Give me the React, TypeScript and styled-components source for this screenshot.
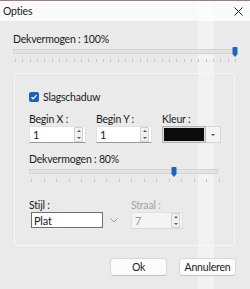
import styled, { createGlobalStyle } from 'styled-components'

const GlobalStyle = createGlobalStyle`
  html, body {
    margin: 0;
    padding: 0;
  }
  body {
    font-family: Lato, 'Noto Sans', sans-serif;
    font-size: 10.5px;
    letter-spacing: -0.2px;
    color: #1b1b1b;
  }
`

const Window = styled.div`
  width: 250px;
  height: 289px;
  box-sizing: border-box;
  display: flex;
  flex-direction: column;
  border-top: 1px solid #9a7f84;
  background:
    linear-gradient(90deg, transparent 0 198px, rgba(255, 255, 255, 0.4) 198px 214px, transparent 214px),
    #eaeaea;
  overflow: hidden;
`

const TitleBar = styled.div`
  height: 20px;
  display: flex;
  align-items: center;
  justify-content: space-between;
  padding: 0 7px 0 3px;
  background: rgba(255, 255, 255, 0.75);
  font-size: 10.5px;
`

const Body = styled.div`
  flex: 1;
  display: flex;
  flex-direction: column;
  padding: 12px 14px 0 13px;
`

const Label = styled.div<{ $disabled?: boolean }>`
  line-height: 13px;
  height: 13px;
  white-space: nowrap;
  color: ${(p) => (p.$disabled ? '#a3a3a3' : '#1b1b1b')};
`

const SliderBox = styled.div<{ $width: number }>`
  width: ${(p) => p.$width}px;
  display: flex;
  flex-direction: column;
  gap: 2px;
  margin-top: 1px;
`

const Rail = styled.div`
  position: relative;
  height: 10px;
  padding: 2px 0;
  box-sizing: border-box;
`

const Track = styled.div`
  height: 5px;
  margin-right: 4px;
  box-sizing: border-box;
  background: #e3e3e3;
  border: 1px solid #d4d4d4;
`

const Thumb = styled.svg`
  position: absolute;
  top: 0;
  width: 6px;
  height: 10px;
`

const Ticks = styled.div`
  display: flex;
  justify-content: space-between;
  padding: 0 2px;
`

const Tick = styled.span`
  width: 1px;
  height: 3px;
  background: #c4c4c4;
`

const Group = styled.div`
  margin: 11px 1px 0 1px;
  border: 1px solid #f7f7f7;
  border-radius: 2px;
  padding: 18px 14px 16px 14px;
  display: flex;
  flex-direction: column;
`

const CheckRow = styled.label`
  display: flex;
  align-items: center;
  gap: 4px;
  height: 10px;
`

const CheckBox = styled.span`
  width: 10px;
  height: 10px;
  border-radius: 2px;
  background: #1a64b8;
  display: flex;
  align-items: center;
  justify-content: center;
`

const FieldGrid = styled.div<{ $cols: string }>`
  display: grid;
  grid-template-columns: ${(p) => p.$cols};
  column-gap: 10px;
`

const Field = styled.div`
  display: flex;
  flex-direction: column;
`

const Spin = styled.div<{ $disabled?: boolean }>`
  height: 17px;
  box-sizing: border-box;
  display: flex;
  align-items: center;
  justify-content: space-between;
  padding: 0 2px 0 3px;
  background: ${(p) => (p.$disabled ? '#f4f4f4' : '#ffffff')};
  border: 1px solid #e2e2e2;
  border-bottom-color: ${(p) => (p.$disabled ? '#dadada' : '#9a9a9a')};
  color: ${(p) => (p.$disabled ? '#9a9a9a' : '#1b1b1b')};
  font-size: 11px;
`

const SpinButtons = styled.div`
  width: 7px;
  height: 13px;
  display: flex;
  flex-direction: column;
  justify-content: space-around;
  align-items: center;
  background: #f1f1f1;
  border: 1px solid #d0d0d0;
  border-radius: 1px;
`

const Arrow = styled.span<{ $up?: boolean }>`
  width: 0;
  height: 0;
  border-left: 2px solid transparent;
  border-right: 2px solid transparent;
  ${(p) => (p.$up ? 'border-bottom: 2px solid #555;' : 'border-top: 2px solid #555;')}
`

const ColorPick = styled.div`
  height: 17px;
  display: flex;
  align-items: stretch;
`

const Swatch = styled.div`
  width: 45px;
  box-sizing: border-box;
  border: 1px solid #b5b5b5;
  padding: 1px;
  background: #dcdcdc;
  &::after {
    content: '';
    display: block;
    height: 100%;
    background: #0b0b0b;
  }
`

const DropButton = styled.div`
  width: 14px;
  display: flex;
  align-items: center;
  justify-content: center;
  background: #f3f3f3;
  border: 1px solid #d6d6d6;
  border-left: none;
`

const Combo = styled.div`
  display: flex;
  align-items: center;
  gap: 7px;
  padding-left: 2px;
`

const ComboField = styled.div`
  width: 72px;
  height: 16px;
  box-sizing: border-box;
  display: flex;
  align-items: center;
  padding-left: 2px;
  background: #ffffff;
  border: 1px solid #6e6e6e;
  font-size: 11px;
`

const Chevron = styled.svg`
  width: 8px;
  height: 5px;
`

const ButtonRow = styled.div`
  margin-top: 12px;
  display: flex;
  justify-content: flex-end;
  gap: 12px;
`

const Button = styled.button`
  width: 57px;
  height: 18px;
  padding: 0;
  font-family: inherit;
  font-size: 10.5px;
  letter-spacing: -0.2px;
  color: #1b1b1b;
  background: #fbfbfb;
  border: 1px solid #d8d8d8;
  border-bottom-color: #c4c4c4;
  border-radius: 4px;
`

function Slider({ width, value, ticks }: { width: number; value: number; ticks: number }) {
  return (
    <SliderBox $width={width}>
      <Rail>
        <Track />
        <Thumb viewBox="0 0 6 10" style={{ left: Math.round(value * (width - 6)) }}>
          <path d="M0.5 1 Q0.5 0 1.5 0 H4.5 Q5.5 0 5.5 1 V7 L3 10 L0.5 7 Z" fill="#1d65bb" />
        </Thumb>
      </Rail>
      <Ticks>
        {Array.from({ length: ticks }).map((_, i) => (
          <Tick key={i} />
        ))}
      </Ticks>
    </SliderBox>
  )
}

function SpinBox({ value, disabled }: { value: string; disabled?: boolean }) {
  return (
    <Spin $disabled={disabled}>
      <span>{value}</span>
      <SpinButtons>
        <Arrow $up />
        <Arrow />
      </SpinButtons>
    </Spin>
  )
}

export default function App() {
  return (
    <>
      <GlobalStyle />
      <Window>
        <TitleBar>
          <span>Opties</span>
          <svg width="9" height="9" viewBox="0 0 9 9">
            <path d="M0.5 0.5 L8.5 8.5 M8.5 0.5 L0.5 8.5" stroke="#222" strokeWidth="1" />
          </svg>
        </TitleBar>
        <Body>
          <Label>Dekvermogen : 100%</Label>
          <Slider width={225} value={1} ticks={31} />
          <Group>
            <CheckRow>
              <CheckBox>
                <svg width="8" height="8" viewBox="0 0 8 8">
                  <path d="M1.5 4.2 L3.2 5.8 L6.5 2.2" stroke="#fff" strokeWidth="1.2" fill="none" />
                </svg>
              </CheckBox>
              Slagschaduw
            </CheckRow>
            <FieldGrid $cols="57px 56px 59px" style={{ marginTop: 11 }}>
              <Field>
                <Label>Begin X :</Label>
                <SpinBox value="1" />
              </Field>
              <Field>
                <Label>Begin Y :</Label>
                <SpinBox value="1" />
              </Field>
              <Field>
                <Label>Kleur :</Label>
                <ColorPick>
                  <Swatch />
                  <DropButton>
                    <Arrow />
                  </DropButton>
                </ColorPick>
              </Field>
            </FieldGrid>
            <Label style={{ marginTop: 10 }}>Dekvermogen : 80%</Label>
            <Slider width={193} value={0.76} ticks={16} />
            <FieldGrid $cols="92px 52px" style={{ marginTop: 17 }}>
              <Field>
                <Label>Stijl :</Label>
                <Combo>
                  <ComboField>Plat</ComboField>
                  <Chevron viewBox="0 0 8 5">
                    <path d="M0.5 0.5 L4 4 L7.5 0.5" stroke="#9a9a9a" fill="none" />
                  </Chevron>
                </Combo>
              </Field>
              <Field>
                <Label $disabled>Straal :</Label>
                <SpinBox value="7" disabled />
              </Field>
            </FieldGrid>
          </Group>
          <ButtonRow>
            <Button>Ok</Button>
            <Button>Annuleren</Button>
          </ButtonRow>
        </Body>
      </Window>
    </>
  )
}
